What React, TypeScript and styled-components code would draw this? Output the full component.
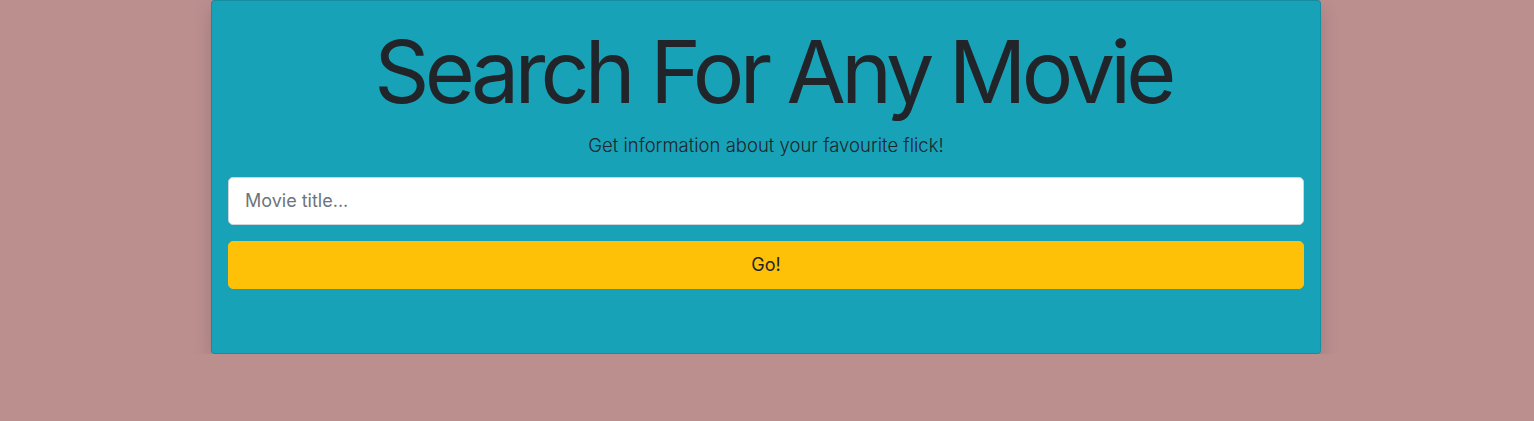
import React from "react";
import styled, { createGlobalStyle } from "styled-components";

const Global = createGlobalStyle`
  html, body { margin: 0; padding: 0; }
  body {
    background: #bc8f8f;
    font-family: Inter, "Noto Sans", sans-serif;
    color: #212529;
  }
`;

const Container = styled.div`
  width: 1110px;
  margin: 0 auto;
  padding-right: 2px;
`;

const Card = styled.section`
  background: #17a2b8;
  border: 1px solid rgba(0, 0, 0, 0.125);
  border-radius: 4px;
  box-shadow: 0 8px 18px rgba(0, 0, 0, 0.17);
  padding: 20px 16px 64px;
  display: flex;
  flex-direction: column;
`;

const Title = styled.h1`
  margin: 0;
  padding-left: 14px;
  font-size: 86px;
  font-weight: 400;
  line-height: 1.2;
  text-align: center;
  letter-spacing: -4.8px;
  color: #212529;
`;

const Lead = styled.p`
  margin: 8px 0 17px;
  font-size: 18.5px;
  font-weight: 300;
  line-height: 1.5;
  text-align: center;
`;

const Form = styled.form`
  display: flex;
  flex-direction: column;
  gap: 16px;
`;

const Input = styled.input`
  box-sizing: border-box;
  height: 48px;
  padding: 8px 16px;
  font-family: inherit;
  font-size: 18px;
  color: #495057;
  background: #fff;
  border: 1px solid #ced4da;
  border-radius: 5px;
  outline: none;
  &::placeholder { color: #6c757d; }
`;

const Button = styled.button`
  height: 48px;
  border: 1px solid #ffc107;
  background: #ffc107;
  color: #212529;
  border-radius: 5px;
  font-family: inherit;
  font-size: 18px;
  cursor: pointer;
`;

export default function App() {
  return (
    <>
      <Global />
      <Container>
        <Card>
          <Title>Search For Any Movie</Title>
          <Lead>Get information about your favourite flick!</Lead>
          <Form onSubmit={(e) => e.preventDefault()}>
            <Input placeholder="Movie title..." />
            <Button type="submit">Go!</Button>
          </Form>
        </Card>
      </Container>
    </>
  );
}
